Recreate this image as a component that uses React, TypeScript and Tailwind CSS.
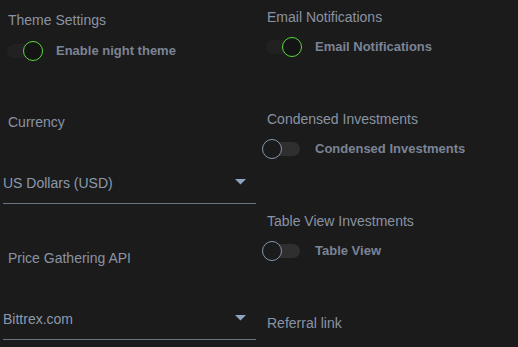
import React from 'react'

function Toggle({ on, label }: { on: boolean; label: string }) {
  return (
    <div className="flex items-center h-5">
      {/* Switch */}
      <div className="relative w-[40px] h-5 shrink-0">
        <div
          className={
            on
              ? 'absolute left-[4px] top-[3px] w-[34px] h-[14px] rounded-full bg-[#212121]'
              : 'absolute left-[4px] top-[3px] w-[34px] h-[14px] rounded-full bg-[#2f2f2f]'
          }
        />
        <div
          className={
            on
              ? 'absolute left-[20px] top-0 w-5 h-5 rounded-full border border-[#5ad83c] bg-[#141414]'
              : 'absolute left-0 top-0 w-5 h-5 rounded-full border border-[#8597aa] bg-[#1b1b1b]'
          }
        />
      </div>
      <span className="ml-[13px] text-[13px] leading-5 font-bold text-[#7b8495]">
        {label}
      </span>
    </div>
  )
}

function Heading({ children, className = '' }: { children: React.ReactNode; className?: string }) {
  return <div className={`h-5 text-[14px] leading-5 text-[#8a93a3] ${className}`}>{children}</div>
}

function Select({ value, className = '' }: { value: string; className?: string }) {
  return (
    <div
      className={`flex items-center justify-between w-[253px] h-5 box-content pb-[10px] border-b border-[#6b7581] ${className}`}
    >
      <span className="text-[14px] leading-5 text-[#8c99ac]">{value}</span>
      <svg width="11" height="6" viewBox="0 0 11 6" className="mr-[10px] -mt-[3px]">
        <path d="M0 0 L11 0 L5.5 5.5 Z" fill="#8ea4c2" />
      </svg>
    </div>
  )
}

export default function App() {
  return (
    <div
      className="w-[518px] h-[347px] overflow-hidden bg-[#1b1b1b] grid grid-cols-2"
      style={{ fontFamily: '"Liberation Sans", Arial, sans-serif' }}
    >
      {/* Left column */}
      <div className="flex flex-col pl-[3px] pt-[10px]">
        <Heading className="ml-[5px]">Theme Settings</Heading>
        <div className="mt-[11px]">
          <Toggle on label="Enable night theme" />
        </div>

        <Heading className="ml-[5px] mt-[51px]">Currency</Heading>
        <Select value="US Dollars (USD)" className="mt-[41px]" />

        <Heading className="ml-[5px] mt-[44px]">Price Gathering API</Heading>
        <Select value="Bittrex.com" className="mt-[41px]" />
      </div>

      {/* Right column */}
      <div className="flex flex-col pl-[3px] pt-[7px]">
        <Heading className="ml-[5px]">Email Notifications</Heading>
        <div className="mt-[10px]">
          <Toggle on label="Email Notifications" />
        </div>

        <Heading className="ml-[5px] mt-[52px]">Condensed Investments</Heading>
        <div className="mt-[10px]">
          <Toggle on={false} label="Condensed Investments" />
        </div>

        <Heading className="ml-[5px] mt-[52px]">Table View Investments</Heading>
        <div className="mt-[10px]">
          <Toggle on={false} label="Table View" />
        </div>

        <Heading className="ml-[5px] mt-[52px]">Referral link</Heading>
      </div>
    </div>
  )
}
